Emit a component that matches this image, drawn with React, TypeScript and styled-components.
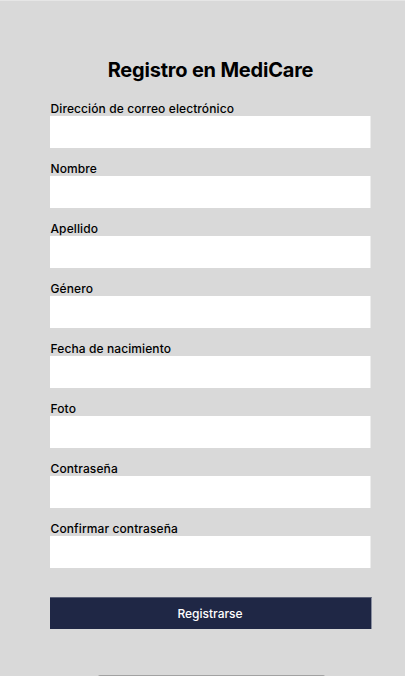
import React from 'react';
import styled, { createGlobalStyle } from 'styled-components';

const GlobalStyle = createGlobalStyle`
    html, body {
        margin: 0;
        padding: 0;
        background: #d9d9d9;
    }
    * {
        box-sizing: border-box;
    }
`

const fields = [
    'Dirección de correo electrónico',
    'Nombre',
    'Apellido',
    'Género',
    'Fecha de nacimiento',
    'Foto',
    'Contraseña',
    'Confirmar contraseña',
]

const App: React.FC = () => {
    return (
        <Page>
            <GlobalStyle />
            <Title>Registro en MediCare</Title>
            <Form>
                {fields.map((label) => (
                    <Field key={label}>
                        <Label>{label}</Label>
                        <Input />
                    </Field>
                ))}
                <Button type="button">Registrarse</Button>
            </Form>
            <HomeBar />
        </Page>
    )
}
export default App

const Page = styled.div`
    width: 405px;
    height: 676px;
    display: flex;
    flex-direction: column;
    align-items: center;
    background: #d9d9d9;
    border-top: 1px solid #e6e6e6;
    padding-top: 57px;
    font-family: Inter, 'Noto Sans', sans-serif;
    color: #000;
    overflow: hidden;
`
const Title = styled.h1`
    margin: 0 0 19px 16px;
    font-size: 20px;
    line-height: 24px;
    font-weight: 700;
    letter-spacing: -0.2px;
`
const Form = styled.form`
    width: 322px;
    margin-left: 16px;
    display: flex;
    flex-direction: column;
    gap: 13px;
`
const Field = styled.div`
    display: flex;
    flex-direction: column;
`
const Label = styled.label`
    font-size: 12px;
    line-height: 14px;
    font-weight: 500;
    padding: 1px 0 0 1px;
    letter-spacing: 0.1px;
`
const Input = styled.input`
    width: 321px;
    height: 32px;
    border: none;
    border-right: 1px solid #ececec;
    background: #ffffff;
    outline: none;
`
const Button = styled.button`
    margin-top: 16px;
    width: 322px;
    height: 32px;
    border: none;
    border-top: 1px solid #5b6177;
    border-right: 1px solid #8a8fa0;
    background: #1f2745;
    color: #ffffff;
    font-family: Inter, 'Noto Sans', sans-serif;
    font-size: 12px;
    font-weight: 500;
    cursor: pointer;
`
const HomeBar = styled.div`
    margin-top: auto;
    margin-left: 18px;
    width: 227px;
    height: 2px;
    border-radius: 2px 2px 0 0;
    background: #a2a2a2;
    margin-bottom: -1px;
`
